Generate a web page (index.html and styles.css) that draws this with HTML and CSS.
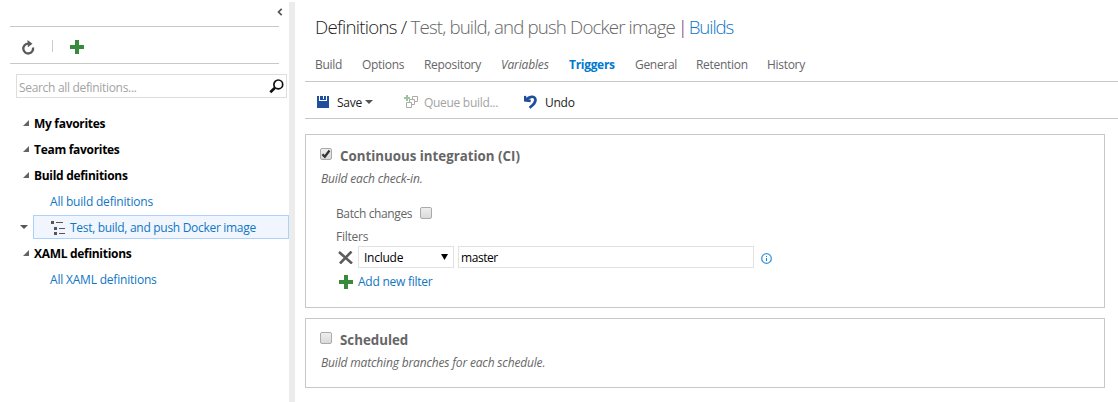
FILE: index.html
```html
<!DOCTYPE html>
<html lang="en">
<head>
<meta charset="utf-8">
<title>Build definitions</title>
<link rel="stylesheet" href="styles.css">
</head>
<body>
<div class="app">
  <aside class="side">
    <div class="side-top"><svg class="collapse" width="6" height="8" viewBox="0 0 6 8"><path d="M4.7 .8 1.5 4l3.2 3.2" fill="none" stroke="#555" stroke-width="1.7"/></svg></div>
    <div class="side-tools">
      <svg class="refresh" width="14" height="15" viewBox="0 0 14 15"><path d="M12 7.600A4.900 4.900 0 1 1 7.200 3.700H9" fill="none" stroke="#5a5a5a" stroke-width="2.300"/><path d="M6.500 0 11.500 3.700 6.800 7.300V5L8 3.700 6.500 2.400z" fill="#5a5a5a"/></svg>
      <span class="divider"></span>
      <svg width="14" height="14" viewBox="0 0 14 14"><path d="M5 0h4v5h5v4H9v5H5V9H0V5h5z" fill="#388a3c"/></svg>
    </div>
    <div class="search"><span class="search-text">Search all definitions...</span>
      <svg class="lens" width="15" height="15" viewBox="0 0 15 15"><circle cx="9.300" cy="5.400" r="4.400" fill="none" stroke="#111" stroke-width="1.700"/><path d="M6 8.700 1.300 13.300" stroke="#111" stroke-width="2.700"/></svg>
    </div>
    <nav class="tree">
      <div class="group"><svg class="tri" width="6" height="6"><path d="M6 0v6H0z"/></svg><span>My favorites</span></div>
      <div class="group"><svg class="tri" width="6" height="6"><path d="M6 0v6H0z"/></svg><span>Team favorites</span></div>
      <div class="group"><svg class="tri" width="6" height="6"><path d="M6 0v6H0z"/></svg><span>Build definitions</span></div>
      <div class="leaf"><span>All build definitions</span></div>
      <div class="selected-row"><svg class="caret" width="8" height="4"><path d="M0 0h8L4 4z"/></svg>
        <div class="selected"><svg width="15" height="14" viewBox="0 0 15 14" fill="#555"><path d="M0 0h3v3H0zM3 6h3v3H3zM3 11h3v3H3zM5 1h7v1H5zM8 7h6v1H8zM8 12h6v1H8z"/></svg><span>Test, build, and push Docker image</span></div>
      </div>
      <div class="group"><svg class="tri" width="6" height="6"><path d="M6 0v6H0z"/></svg><span>XAML definitions</span></div>
      <div class="leaf"><span>All XAML definitions</span></div>
    </nav>
  </aside>
  <div class="splitter"></div>
  <main class="main">
    <h1 class="title"><span class="root">Definitions / </span><span class="name">Test, build, and push Docker image</span><span class="bar"> | </span><span class="builds">Builds</span></h1>
    <nav class="tabs">
      <span class="tab w-build">Build</span><span class="tab w-options">Options</span><span class="tab w-repo">Repository</span><span class="tab w-vars">Variables</span><span class="tab w-trig">Triggers</span><span class="tab w-gen">General</span><span class="tab w-ret">Retention</span><span class="tab">History</span>
    </nav>
    <div class="toolbar">
      <div class="tool save"><svg width="12" height="12" viewBox="0 0 12 12"><path d="M0 0h2v5h8V0h2v12H0zM3 0h3v3h1V0h2v4H3z" fill="#1f4e9c"/></svg><span>Save</span><svg class="caret" width="8" height="4"><path d="M0 0h8L4 4z"/></svg></div>
      <div class="tool queue"><svg width="15" height="15" viewBox="0 0 15 15"><path d="M2 1h2v2h2v2H4v2H2V5H0V3h2z" fill="#9cc49d"/><path d="M8.500 5.500V2.500h5v5h-3M5.500 8.500V5.500h5v5h-3M2.500 8.500h5v5h-5z" fill="none" stroke="#aaa"/></svg><span>Queue build...</span></div>
      <div class="tool undo"><svg width="13" height="14" viewBox="0 0 13 14"><path d="M2.500 4.800C5 1.500 10 .4 11.300 4 12.200 7.500 9 10 5.500 12.800" fill="none" stroke="#1f4e9c" stroke-width="2.700"/><path d="M0 1 2 .8 3 4 7 4.800 6.400 7.200 0 6.600z" fill="#1f4e9c"/></svg><span>Undo</span></div>
    </div>
    <section class="panel ci">
      <div class="head"><span class="check"><svg width="10" height="10" viewBox="0 0 10 10"><path d="M1.400 5.200 3.800 7.700 8.500 1.500" fill="none" stroke="#333" stroke-width="2.200"/></svg></span><h2>Continuous integration (CI)</h2></div>
      <p class="desc">Build each check-in.</p>
      <div class="batch"><span>Batch changes</span><span class="check"></span></div>
      <div class="label">Filters</div>
      <div class="filter">
        <svg class="remove" width="15" height="13" viewBox="0 0 15 13"><path d="M1 1 14 12.500M13.500 .5 2 12.500" fill="none" stroke="#5c5c5c" stroke-width="2.600"/></svg>
        <div class="select"><span>Include</span><svg width="7" height="6"><path d="M0 0h7L3.500 6z"/></svg></div>
        <div class="input">master</div>
        <svg class="info" width="11" height="11" viewBox="0 0 11 11"><circle cx="5.500" cy="5.500" r="4.800" fill="none" stroke="#3797db" stroke-width="1.300"/><path d="M5 5h1v3H5zM5 3h1v1H5z" fill="#1683d0"/></svg>
      </div>
      <div class="add"><svg width="14" height="14" viewBox="0 0 14 14"><path d="M5 0h4v5h5v4H9v5H5V9H0V5h5z" fill="#388a3c"/></svg><span>Add new filter</span></div>
    </section>
    <section class="panel sched">
      <div class="head"><span class="check"></span><h2>Scheduled</h2></div>
      <p class="desc">Build matching branches for each schedule.</p>
    </section>
  </main>
</div>
</body>
</html>
```
FILE: styles.css
```css
* { box-sizing: border-box; }
body { margin: 0; background: #fff; font: 12px/16px "Open Sans", "Noto Sans", sans-serif; letter-spacing: -.25px; color: #666; overflow: hidden; }
svg { display: block; flex: none; }
span, h1, h2, p { white-space: pre; }
h1, h2, p { margin: 0; }
.app { display: flex; width: 1118px; height: 402px; }
.side { width: 289px; flex: none; }
.splitter { width: 6px; flex: none; margin-top: 2px; background: #ececec; }
.side-top { height: 27px; margin: 0 10px; border-bottom: 1px solid #c8c8c8; display: flex; justify-content: flex-end; padding-top: 8px; }
.collapse { margin-right: -4px; }
.side-tools { height: 37px; margin: 0 10px; border-bottom: 1px solid #c8c8c8; display: flex; align-items: flex-start; padding: 13px 0 0 11px; }
.divider { width: 1px; height: 12px; background: #ccc; margin: 0 17px; }
.search { width: 271px; height: 24px; margin: 10px 0 0 16px; border: 1px solid #ddd; padding: 0 2px; display: flex; align-items: center; justify-content: space-between; color: #a3a3a3; }
.search-text { padding-top: 3px; letter-spacing: -.32px; }
.lens { margin-top: 1px; }
.tree { padding-top: 13px; }
.group, .leaf { height: 26px; display: flex; align-items: center; }
.group { font-weight: 700; color: #000; padding-left: 23px; gap: 5px; letter-spacing: -.3px; }
.tri { fill: #646464; margin-top: -3px; }
.leaf { padding-left: 50px; color: #0f76c4; letter-spacing: -.2px; }
.caret { fill: #555; }
.selected-row { height: 26px; display: flex; align-items: center; padding: 0 0 2px 20px; }
.selected { margin-left: 5px; flex: 1; height: 24px; border: 1px solid #add1fa; background: #f1f6fe; color: #0f76c4; display: flex; align-items: center; padding: 2px 0 0 17px; gap: 4px; letter-spacing: -.3px; }
.main { flex: 1; padding-left: 10px; }
.title { height: 52px; padding: 14px 0 0 10px; font-size: 18.700px; line-height: 26px; font-weight: 300; letter-spacing: -.85px; color: #222; }
.root { letter-spacing: -.73px; }
.name { color: #666; }
.bar { color: #6b1f6b; letter-spacing: -2px; }
.builds { color: #0f76c4; letter-spacing: -1.1px; }
.tabs { height: 30px; padding: 5px 0 0 10px; border-bottom: 1px solid #c8c8c8; display: flex; letter-spacing: -.3px; }
.tab { flex: none; }
.w-build { width: 47px; }
.w-options { width: 62px; }
.w-repo { width: 77px; }
.w-vars { width: 68px; font-style: italic; letter-spacing: -.15px; }
.w-trig { width: 66px; font-weight: 700; color: #0078cf; }
.w-gen { width: 61px; }
.w-ret { width: 71px; }
.toolbar { height: 37px; border-bottom: 1px solid #c8c8c8; display: flex; align-items: center; padding: 5px 0 0 12px; color: #222; }
.tool { display: flex; align-items: center; flex: none; }
.save { width: 87px; gap: 8px; }
.save svg, .queue svg, .undo svg { margin-top: -2px; }
.save .caret { margin-left: -5px; }
.queue { width: 120px; gap: 5px; color: #a3a3a3; letter-spacing: -.3px; }
.undo { gap: 8px; }
.panel { width: 800px; border: 1px solid #c8c8c8; }
.ci { height: 174px; margin-top: 15px; }
.sched { height: 70px; margin-top: 10px; }
.head { display: flex; padding: 13px 0 0 14px; height: 36px; gap: 8px; }
.check { width: 12px; height: 12px; flex: none; border: 1px solid #aaa; border-radius: 2px; background: linear-gradient(#eee, #dadada); display: flex; }
h2 { font-size: 13.300px; line-height: 16px; font-weight: 700; letter-spacing: 0; color: #666; }
.desc { font-style: italic; padding-left: 15px; letter-spacing: -.16px; }
.batch { display: flex; align-items: center; gap: 8px; padding: 19px 0 0 30px; letter-spacing: -.38px; }
.batch .check { margin-top: -2px; }
.label { padding: 7px 0 0 30px; }
.filter { display: flex; align-items: center; padding-left: 32px; height: 22px; margin-top: 1px; color: #000; }
.select { width: 96px; height: 22px; border: 1px solid #e2e2e2; margin: 0 4px 0 5px; padding: 3px 5px; display: flex; justify-content: space-between; }
.select svg { margin-top: 4px; }
.input { width: 296px; height: 22px; border: 1px solid #e2e2e2; padding: 3px 2px; letter-spacing: -.45px; }
.info { margin: 3px 0 0 7px; }
.add { display: flex; align-items: center; padding: 6px 0 0 33px; gap: 5px; color: #0f76c4; }
```
